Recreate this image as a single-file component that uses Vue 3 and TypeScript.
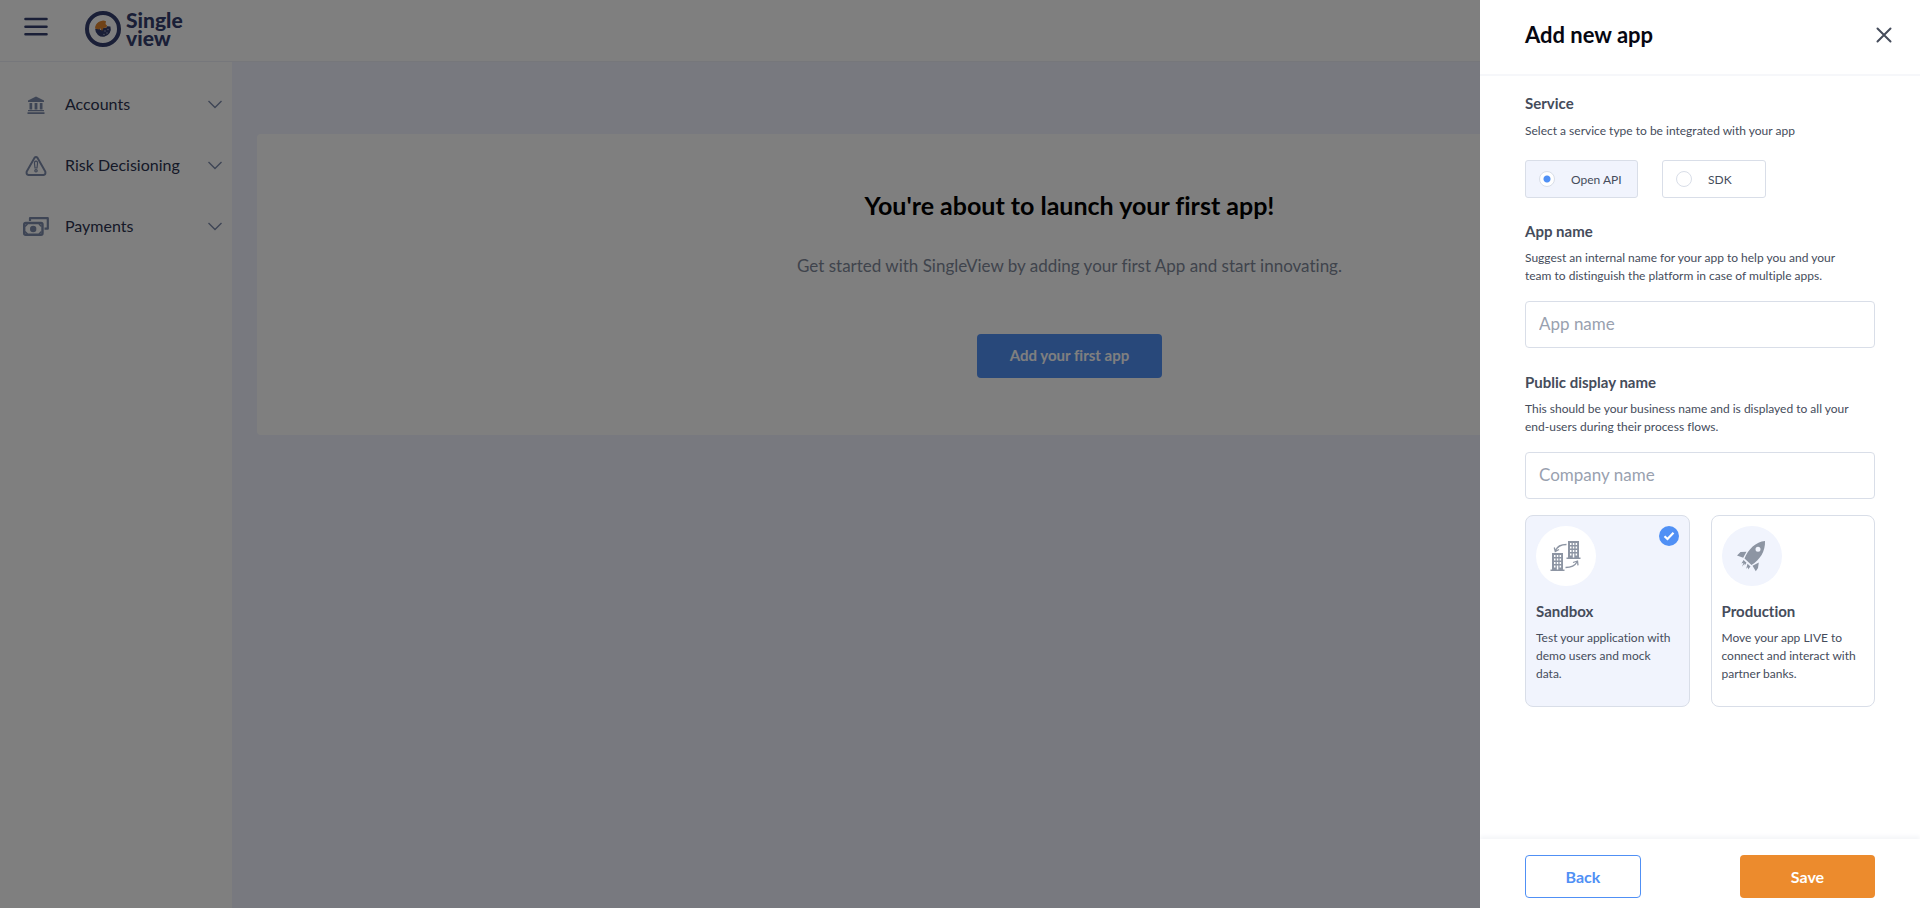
<script setup lang="ts">
import { ref } from 'vue'

interface NavItem {
  label: string
  icon: 'bank' | 'risk' | 'cash'
}

const navItems: NavItem[] = [
  { label: 'Accounts', icon: 'bank' },
  { label: 'Risk Decisioning', icon: 'risk' },
  { label: 'Payments', icon: 'cash' },
]

const service = ref<'api' | 'sdk'>('api')
const environment = ref<'sandbox' | 'production'>('sandbox')
const appName = ref('')
const companyName = ref('')
</script>

<template>
  <div class="page">
    <header class="topbar">
      <button class="menu" type="button" aria-label="Toggle menu">
        <svg width="24" height="20" viewBox="0 0 24 20"><path d="M1.500 2h21M1.500 9.700h21M1.500 17.300h21" /></svg>
      </button>
      <a class="logo" href="#">
        <svg width="36" height="36" viewBox="0 0 36 36">
          <circle cx="18" cy="18" r="16" fill="none" stroke="#343f6e" stroke-width="4" />
          <path d="M10.200 18l3-1 2.500 2 2-2 3.500-.2 1-1.600 3.200.3a7.800 7.800 0 1 1-15.200 2.500z" fill="#343f6e" />
          <path d="M10 17.500a8 8 0 0 1 11-7.300l-.5 2.800 1.500 1.500-.5 2-3 .5-1.500 3-1.300-2.500-2 1z" fill="#de852f" />
          <g fill="#a9b0cc">
            <circle cx="20" cy="20" r=".7" /><circle cx="23" cy="18.500" r=".7" />
            <circle cx="22" cy="22" r=".7" /><circle cx="19" cy="23.500" r=".7" />
          </g>
        </svg>
        <span class="wordmark">Single<br />view</span>
      </a>
    </header>

    <div class="body">
      <nav class="sidebar">
        <button v-for="item in navItems" :key="item.label" class="nav-item" type="button">
          <span class="nav-icon">
            <svg v-if="item.icon === 'bank'" width="18" height="18" viewBox="0 0 18 18" fill="#7d8baa">
              <path d="M9 .5L17 4.500V6H1V4.500zM2.500 7h2.700v6.500H2.500zM7.600 7h2.800v6.500H7.600zM12.800 7h2.700v6.500h-2.700zM1 14h16v1.200H1zM.5 16.200h17V18H.5z" />
            </svg>
            <svg v-else-if="item.icon === 'risk'" width="22" height="20" viewBox="0 0 22 20" fill="none" stroke="#7d8baa">
              <path d="M9.400 2Q11 .2 12.600 2L20.300 15.500Q21 18.700 18.500 19h-15Q1 18.700 1.700 15.500z" stroke-width="2" />
              <path d="M11 5.200c1.300 0 1.700 1 1.500 2.400L12 12h-2l-.5-4.400C9.300 6.200 9.700 5.200 11 5.200z" stroke-width="1.200" />
              <circle cx="11" cy="14.800" r="1.200" stroke-width="1.200" />
            </svg>
            <svg v-else width="26" height="19" viewBox="0 0 26 19">
              <path d="M7 4V1.200h17.800v10.500h-3.300" fill="none" stroke="#7d8baa" stroke-width="2.200" stroke-linejoin="round" />
              <rect x="1.200" y="6" width="18.300" height="11.800" rx="1.500" fill="none" stroke="#7d8baa" stroke-width="2.400" />
              <circle cx="10.200" cy="12" r="3.200" fill="#7d8baa" />
              <path d="M2 9.500L4.500 7M18.500 9.500L16 7M2 14.500L4.500 17M18.500 14.500L16 17" stroke="#7d8baa" stroke-width="1.500" />
            </svg>
          </span>
          <span class="nav-label">{{ item.label }}</span>
          <svg class="chevron" width="14" height="9" viewBox="0 0 14 9"><path d="M.5 1L7 7.500 13.500 1" /></svg>
        </button>
      </nav>

      <main class="content">
        <section class="welcome">
          <h1>You're about to launch your first app!</h1>
          <p>Get started with SingleView by adding your first App and start innovating.</p>
          <button class="primary" type="button">Add your first app</button>
        </section>
      </main>
    </div>

    <div class="backdrop"></div>

    <form class="drawer" @submit.prevent>
      <header class="drawer-head">
        <h2>Add new app</h2>
        <button class="close" type="button" aria-label="Close">
          <svg width="16" height="16" viewBox="0 0 16 16"><path d="M1.500 1.500l13 13M14.500 1.500l-13 13" /></svg>
        </button>
      </header>

      <div class="drawer-body">
        <fieldset class="group service">
          <legend>Service</legend>
          <p>Select a service type to be integrated with your app</p>
          <div class="options">
            <label class="option" :class="{ active: service === 'api' }">
              <input v-model="service" type="radio" name="service" value="api" />Open API
            </label>
            <label class="option" :class="{ active: service === 'sdk' }">
              <input v-model="service" type="radio" name="service" value="sdk" />SDK
            </label>
          </div>
        </fieldset>

        <div class="group">
          <label class="title" for="app-name">App name</label>
          <p>Suggest an internal name for your app to help you and your team to distinguish the platform in case of multiple apps.</p>
          <input id="app-name" v-model="appName" class="text" type="text" placeholder="App name" />
        </div>

        <div class="group">
          <label class="title" for="company-name">Public display name</label>
          <p>This should be your business name and is displayed to all your end-users during their process flows.</p>
          <input id="company-name" v-model="companyName" class="text" type="text" placeholder="Company name" />
        </div>

        <div class="cards">
          <label class="card" :class="{ active: environment === 'sandbox' }">
            <input v-model="environment" class="hidden" type="radio" name="environment" value="sandbox" />
            <span class="card-icon">
              <svg width="32" height="32" viewBox="0 0 32 32">
                <path fill="#8d95a3" fill-rule="evenodd" d="M18 1h11v16.500h1.500V19h-14v-1.500H18zM20 3v2h1.500V3zM22.800 3v2h1.500V3zM25.600 3v2h1.500V3zM20 6.500v2h1.500v-2zM22.800 6.500v2h1.500v-2zM25.600 6.500v2h1.500v-2zM20 10v2h1.500v-2zM22.800 10v2h1.500v-2zM25.600 10v2h1.500v-2zM20 13.500v2h1.500v-2zM22.800 13.500v4h1.500v-4zM25.600 13.500v2h1.500v-2z" />
                <path fill="#8d95a3" fill-rule="evenodd" d="M2 13h11v16.500h1.500V31H.5v-1.500H2zM4 15v2h1.500v-2zM6.800 15v2h1.500v-2zM9.600 15v2h1.500v-2zM4 18.500v2h1.500v-2zM6.800 18.500v2h1.500v-2zM9.600 18.500v2h1.500v-2zM4 22v2h1.500v-2zM6.800 22v2h1.500v-2zM9.600 22v2h1.500v-2zM4 25.500v2h1.500v-2zM6.800 25.500v4h1.500v-4zM9.600 25.500v2h1.500v-2z" />
                <path fill="none" stroke="#8d95a3" stroke-width="1.300" d="M16.500 4.500Q8 4.500 5.500 10.500M4.300 7.500l1 4 3.700-2M15.500 27.500Q24 27.500 27 22M23 22.500l4.500-1.500.5 4.300" />
              </svg>
            </span>
            <span v-if="environment === 'sandbox'" class="tick">
              <svg width="12" height="10" viewBox="0 0 12 10"><path d="M1.500 5.200L4.500 8 10.500 1.800" /></svg>
            </span>
            <strong>Sandbox</strong>
            <span class="card-text">Test your application with demo users and mock data.</span>
          </label>
          <label class="card" :class="{ active: environment === 'production' }">
            <input v-model="environment" class="hidden" type="radio" name="environment" value="production" />
            <span class="card-icon">
              <svg width="32" height="32" viewBox="0 0 32 32" fill="#8d95a3">
                <path fill-rule="evenodd" d="M29 1C20 1.500 12 9.500 8.500 18.500L15.500 25C24 20 29.500 11 29 1zM22 6.800a2.500 2.500 0 1 1 0 5 2.500 2.500 0 0 1 0-5z" />
                <path d="M10.500 11.800L4.500 12 1 15.500l6.200 2.200zM22.800 22.500L22 28l-2.200 3.300L16.500 25.800zM7.600 20L10.500 22.700 8.800 25.500 8.600 23.600 6 26.800 7.500 22.800 5.400 23.500zM11.500 23.800L14.500 26.500 12 29.600 12 27.200 10.200 28.800z" />
              </svg>
            </span>
            <span v-if="environment === 'production'" class="tick">
              <svg width="12" height="10" viewBox="0 0 12 10"><path d="M1.500 5.200L4.500 8 10.500 1.800" /></svg>
            </span>
            <strong>Production</strong>
            <span class="card-text">Move your app LIVE to connect and interact with partner banks.</span>
          </label>
        </div>
      </div>

      <footer class="drawer-foot">
        <button class="back" type="button">Back</button>
        <button class="save" type="submit">Save</button>
      </footer>
    </form>
  </div>
</template>

<style>
body {
  margin: 0;
}
</style>

<style scoped>
.page,
.page * {
  box-sizing: border-box;
}
.page {
  display: flex;
  flex-direction: column;
  min-height: 100vh;
  font-family: Lato, "Liberation Sans", sans-serif;
  font-variant-ligatures: none;
  color: #454c5b;
}
button,
input {
  font-family: inherit;
  font-variant-ligatures: none;
}
button {
  cursor: pointer;
}
h1,
h2,
p {
  margin: 0;
}
.topbar {
  display: flex;
  align-items: flex-start;
  gap: 37px;
  height: 62px;
  padding: 11px 24px 0;
  border-bottom: 1px solid #eceef6;
}
.menu {
  width: 24px;
  padding: 6px 0 0;
  border: 0;
  background: none;
  line-height: 0;
}
.menu path {
  stroke: #343f6e;
  stroke-width: 2.6;
  stroke-linecap: round;
}
.logo {
  display: flex;
  gap: 5px;
  color: #343f6e;
  text-decoration: none;
}
.wordmark {
  font-size: 21px;
  line-height: 18px;
  font-weight: 900;
}
.body {
  display: flex;
  flex: 1;
}
.sidebar {
  flex: 0 0 232px;
  padding-top: 12px;
}
.nav-item {
  display: flex;
  align-items: center;
  width: 100%;
  height: 61px;
  padding: 0 10px 0 23px;
  border: 0;
  background: none;
  color: #2c3350;
  font-size: 16px;
  text-align: left;
}
.nav-icon {
  display: flex;
  justify-content: center;
  width: 26px;
  margin-right: 16px;
}
.nav-label {
  flex: 1;
  padding-bottom: 2px;
}
.chevron path {
  fill: none;
  stroke: #7d8baa;
  stroke-width: 1.4;
}
.content {
  flex: 1;
  padding: 72px 38px 0 25px;
  background: #f1f3fe;
}
.welcome {
  display: flex;
  flex-direction: column;
  align-items: center;
  padding: 55px 24px 57px;
  border-radius: 4px;
  background: #fff;
}
.welcome h1 {
  color: #000;
  font-size: 25px;
  line-height: 32px;
  font-weight: 700;
}
.welcome p {
  margin-top: 33px;
  color: #7f8899;
  font-size: 17px;
  line-height: 24px;
}
.primary {
  width: 185px;
  height: 44px;
  margin-top: 56px;
  padding-bottom: 3px;
  border: 0;
  border-radius: 4px;
  background: #5090f5;
  color: #fff;
  font-size: 15px;
  font-weight: 700;
}
.backdrop {
  position: fixed;
  inset: 0;
  background: rgba(0, 0, 0, 0.5);
}
.drawer {
  position: fixed;
  top: 0;
  right: 0;
  bottom: 0;
  display: flex;
  flex-direction: column;
  width: 440px;
  overflow: hidden;
  background: #fff;
}
.drawer-head {
  display: flex;
  justify-content: space-between;
  align-items: center;
  height: 76px;
  padding: 0 28px 5px 45px;
  border-bottom: 2px solid #f6f7fa;
}
.drawer-head h2 {
  color: #060711;
  font-size: 22px;
  line-height: 28px;
  font-weight: 700;
}
.close {
  padding: 0;
  border: 0;
  background: none;
  line-height: 0;
}
.close path {
  stroke: #454c5b;
  stroke-width: 2;
  stroke-linecap: round;
}
.drawer-body {
  display: flex;
  flex: 1;
  flex-direction: column;
  padding: 17px 45px 0;
  overflow: auto;
}
.group {
  min-width: 0;
  margin: 0;
  padding: 0;
  border: 0;
}
.service {
  margin-bottom: 23px;
}
legend,
.title {
  display: block;
  padding: 0;
  font-size: 15px;
  line-height: 20px;
  font-weight: 700;
}
.group p {
  max-width: 338px;
  margin: 8px 0 16px;
  font-size: 12px;
  line-height: 18px;
}
.service p {
  margin: 9px 0 20px;
}
.options {
  display: flex;
  gap: 24px;
}
.option {
  display: flex;
  align-items: center;
  gap: 16px;
  min-width: 104px;
  height: 38px;
  padding: 0 13px;
  border: 1px solid #d9dee8;
  border-radius: 3px;
  font-size: 12px;
}
.option:first-child {
  min-width: 113px;
}
.option.active,
.card.active {
  background: #f1f4fd;
}
.option input {
  flex: none;
  width: 16px;
  height: 16px;
  margin: 0;
  border: 1px solid #d9dee8;
  border-radius: 50%;
  appearance: none;
  background: #fff;
}
.option input:checked {
  background: radial-gradient(circle, #5090f5 0 3px, #fff 4px);
}
.text {
  display: block;
  width: 100%;
  height: 47px;
  margin-bottom: 24px;
  padding: 0 13px 2px;
  border: 1px solid #d9dee8;
  border-radius: 4px;
  background: #fff;
  color: #454c5b;
  font-size: 17px;
}
.text::placeholder {
  color: #99a1af;
  opacity: 1;
}
.cards {
  display: grid;
  grid-template-columns: 1fr 1fr;
  gap: 21px;
  margin-top: -8px;
}
.card {
  position: relative;
  display: flex;
  flex-direction: column;
  min-height: 192px;
  padding: 10px;
  border: 1px solid #d9dee8;
  border-radius: 8px;
}
.hidden {
  position: absolute;
  opacity: 0;
}
.card-icon {
  display: flex;
  align-items: center;
  justify-content: center;
  width: 60px;
  height: 60px;
  border-radius: 50%;
  background: #f1f4fd;
}
.card.active .card-icon {
  background: #fff;
}
.tick {
  position: absolute;
  top: 10px;
  right: 10px;
  display: flex;
  align-items: center;
  justify-content: center;
  width: 20px;
  height: 20px;
  border-radius: 50%;
  background: #5090f5;
}
.tick path {
  fill: none;
  stroke: #fff;
  stroke-width: 2.2;
}
.card strong {
  margin-top: 15px;
  font-size: 15px;
  line-height: 20px;
}
.card-text {
  margin-top: 8px;
  font-size: 12px;
  line-height: 18px;
}
.drawer-foot {
  display: flex;
  justify-content: space-between;
  padding: 16px 45px 10px;
  box-shadow: 0 -3px 4px #f5f6f9;
}
.drawer-foot button {
  height: 43px;
  border-radius: 4px;
  font-size: 16px;
  font-weight: 700;
}
.back {
  width: 116px;
  border: 1px solid #5090f5;
  background: #fff;
  color: #5090f5;
}
.save {
  width: 135px;
  border: 0;
  background: #ec8b2d;
  color: #fff;
}
</style>
